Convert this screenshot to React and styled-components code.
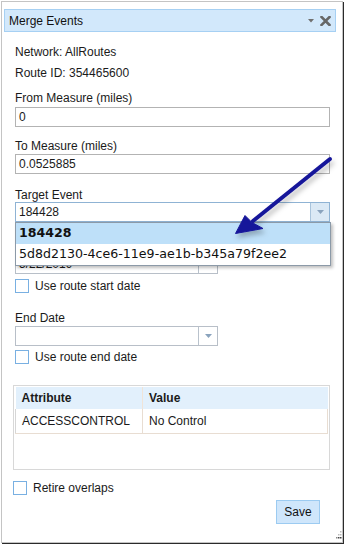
import React from "react"
import styled, { createGlobalStyle } from "styled-components"

const GlobalStyle = createGlobalStyle`
  html, body {
    margin: 0;
    padding: 0;
    background: #ffffff;
  }
  body {
    font-family: "Liberation Sans", Arial, sans-serif;
    font-size: 12px;
    color: #1a1a1a;
  }
  * {
    box-sizing: border-box;
  }
`

const Frame = styled.div`
  position: relative;
  width: 345px;
  height: 545px;
  padding: 1px 0 0 1px;
  overflow: hidden;
`

const Panel = styled.div`
  position: relative;
  width: 342px;
  height: 542px;
  border: 1px solid #c4c4c4;
  box-shadow: 1px 1px 0 #2a2a2a;
  padding: 7px 6px 0 2px;
  background: #ffffff;
`

const TitleBar = styled.div`
  display: flex;
  align-items: center;
  height: 23px;
  padding: 0 4px 0 4px;
  background: #d2e8fb;
  border: 1px solid #a6d0f3;
  color: #111;
`

const Title = styled.span`
  flex: 1;
  line-height: 14px;
`

const TitleIcons = styled.div`
  display: flex;
  align-items: center;
  gap: 6px;
`

const Body = styled.div`
  display: flex;
  flex-direction: column;
  align-items: flex-start;
  padding: 13px 0 0 11px;
`

const Line = styled.div`
  line-height: 14px;
  height: 14px;
  margin-top: ${(p) => p.$top || 0}px;
  white-space: nowrap;
`

// the "Start Date" caption sits under the open list, so only its room is kept
const Spacer = styled.div`
  height: ${(p) => p.$h}px;
`

const Field = styled.div`
  position: relative;
  display: flex;
  width: ${(p) => p.$width || 315}px;
  height: 20px;
  margin-top: ${(p) => p.$top || 0}px;
  border: 1px solid ${(p) => p.$border || "#b3b3b3"};
  background: #fff;
`

const FieldText = styled.div`
  flex: 1;
  padding: 2px 3px 0;
  line-height: 15px;
  white-space: nowrap;
  overflow: hidden;
`

const DropButton = styled.div`
  width: 19px;
  height: 100%;
  display: flex;
  align-items: center;
  justify-content: center;
  border-left: 1px solid ${(p) => p.$border || "#b9c2cc"};
  background: ${(p) => p.$bg || "#fff"};
`

const Popup = styled.div`
  position: absolute;
  left: -1px;
  top: 19px;
  width: 316px;
  border: 1px solid #8c9aa8;
  background: #fff;
  box-shadow: 2px 2px 3px rgba(0, 0, 0, 0.25);
  z-index: 2;
  font-family: "DejaVu Sans", Verdana, sans-serif;
  font-size: 12.6px;
`

const Option = styled.div`
  height: 21px;
  line-height: 20px;
  padding-left: 3px;
  white-space: nowrap;
  background: ${(p) => (p.$selected ? "#bee0f9" : "#fff")};
  font-weight: ${(p) => (p.$selected ? 700 : 400)};
  color: #111;
`

const CheckRow = styled.label`
  display: flex;
  align-items: center;
  gap: 6px;
  height: 14px;
  margin-top: ${(p) => p.$top || 0}px;
  margin-left: ${(p) => p.$left || 0}px;
  line-height: 14px;
`

const Box = styled.span`
  width: 14px;
  height: 14px;
  border: 1px solid #79b0e2;
  background: #fff;
`

const TableWrap = styled.div`
  width: 317px;
  height: 85px;
  margin-top: 21px;
  margin-left: -2px;
  border: 1px solid #d8d8d8;
  padding: 1px;
`

const Table = styled.table`
  width: 313px;
  border-collapse: collapse;
  table-layout: fixed;
`

const HeadCell = styled.th`
  height: 22px;
  padding: 0 6px;
  text-align: left;
  font-weight: 700;
  background: #e2f0fc;
  border-left: ${(p) => (p.$first ? "none" : "1px solid #f0e4d8")};
`

const Cell = styled.td`
  height: 24px;
  padding: 0 6px;
  border-bottom: 1px solid #e8ddd2;
  border-left: 1px solid ${(p) => (p.$first ? "#d6d6d6" : "#e8ddd2")};
  border-right: ${(p) => (p.$last ? "1px solid #e8ddd2" : "none")};
  white-space: nowrap;
`

const Footer = styled.div`
  display: flex;
  justify-content: flex-end;
  width: 315px;
  margin-top: 5px;
  padding-right: 10px;
`

const SaveButton = styled.button`
  width: 44px;
  height: 24px;
  padding: 0;
  border: 1px solid #9ccbf1;
  background: #cfe6fb;
  font-family: "Liberation Sans", Arial, sans-serif;
  font-size: 12px;
  color: #111;
`

const Grip = styled.svg`
  position: absolute;
  right: 0px;
  bottom: 1px;
`

const ArrowLayer = styled.svg`
  position: absolute;
  left: 0;
  top: 0;
  pointer-events: none;
  z-index: 5;
`

function Caret({ color = "#8aa3bd" }) {
  return (
    <svg width="7" height="4" viewBox="0 0 7 4">
      <path d="M0 0 H7 L3.5 4 Z" fill={color} />
    </svg>
  )
}

function Combo({ value, width, top, border, btnBorder, btnBg, children }) {
  return (
    <Field $width={width} $top={top} $border={border}>
      <FieldText>{value}</FieldText>
      <DropButton $border={btnBorder} $bg={btnBg}>
        <Caret />
      </DropButton>
      {children}
    </Field>
  )
}

export default function App() {
  return (
    <Frame>
      <GlobalStyle />
      <Panel>
        <TitleBar>
          <Title>Merge Events</Title>
          <TitleIcons>
            <svg width="6" height="4" viewBox="0 0 6 4">
              <path d="M0 0 H6 L3 3.5 Z" fill="#707070" />
            </svg>
            <svg width="11" height="10" viewBox="0 0 11 10">
              <path
                d="M1.5 1 L9.5 9 M9.5 1 L1.5 9"
                stroke="#666"
                strokeWidth="2.6"
                strokeLinecap="square"
              />
            </svg>
          </TitleIcons>
        </TitleBar>

        <Body>
          <Line>Network: AllRoutes</Line>
          <Line $top={7}>Route ID: 354465600</Line>

          <Line $top={11}>From Measure (miles)</Line>
          <Field $top={2}>
            <FieldText>0</FieldText>
          </Field>

          <Line $top={12}>To Measure (miles)</Line>
          <Field $top={1}>
            <FieldText>0.0525885</FieldText>
          </Field>

          <Line $top={14}>Target Event</Line>
          <Combo value="184428" border="#8fb3d4" btnBorder="#a9c4dc" btnBg="#dbe9f5">
            <Popup>
              <Option $selected>184428</Option>
              <Option>5d8d2130-4ce6-11e9-ae1b-b345a79f2ee2</Option>
            </Popup>
          </Combo>

          <Spacer $h={32} />
          <Combo value="5/22/2019" width={203} border="#b8bfc8" />
          <CheckRow $top={5}>
            <Box />
            Use route start date
          </CheckRow>

          <Line $top={18}>End Date</Line>
          <Combo value="" width={203} top={1} border="#b8bfc8" />
          <CheckRow $top={4}>
            <Box />
            Use route end date
          </CheckRow>

          <TableWrap>
            <Table>
              <colgroup>
                <col style={{ width: 127 }} />
                <col />
              </colgroup>
              <thead>
                <tr>
                  <HeadCell $first>Attribute</HeadCell>
                  <HeadCell>Value</HeadCell>
                </tr>
              </thead>
              <tbody>
                <tr>
                  <Cell $first>ACCESSCONTROL</Cell>
                  <Cell $last>No Control</Cell>
                </tr>
              </tbody>
            </Table>
          </TableWrap>

          <CheckRow $top={11} $left={-2}>
            <Box />
            Retire overlaps
          </CheckRow>

          <Footer>
            <SaveButton>Save</SaveButton>
          </Footer>
        </Body>

        <Grip width="6" height="10" viewBox="0 0 6 10">
          <rect x="4" y="0" width="1.5" height="1.5" fill="#bbb" />
          <rect x="2" y="3" width="1.5" height="1.5" fill="#bbb" />
          <rect x="4" y="3" width="1.5" height="1.5" fill="#bbb" />
          <rect x="0" y="6" width="1.5" height="1.5" fill="#888" />
          <rect x="2" y="6" width="1.5" height="1.5" fill="#444" />
          <rect x="4" y="6" width="1.5" height="1.5" fill="#444" />
        </Grip>
      </Panel>

      <ArrowLayer width="345" height="545" viewBox="0 0 345 545">
        <defs>
          <filter id="arrowShadow" x="-20%" y="-20%" width="150%" height="150%">
            <feDropShadow dx="2" dy="4" stdDeviation="2.5" floodColor="#000" floodOpacity="0.25" />
          </filter>
        </defs>
        <g filter="url(#arrowShadow)" fill="#17179a" stroke="#17179a">
          <line x1="330" y1="159" x2="253" y2="221" strokeWidth="4" strokeLinecap="round" />
          <path d="M235.5 233.5 L245 215.5 L252 222.5 L263 228.5 Z" strokeWidth="1" strokeLinejoin="round" />
        </g>
      </ArrowLayer>
    </Frame>
  )
}
